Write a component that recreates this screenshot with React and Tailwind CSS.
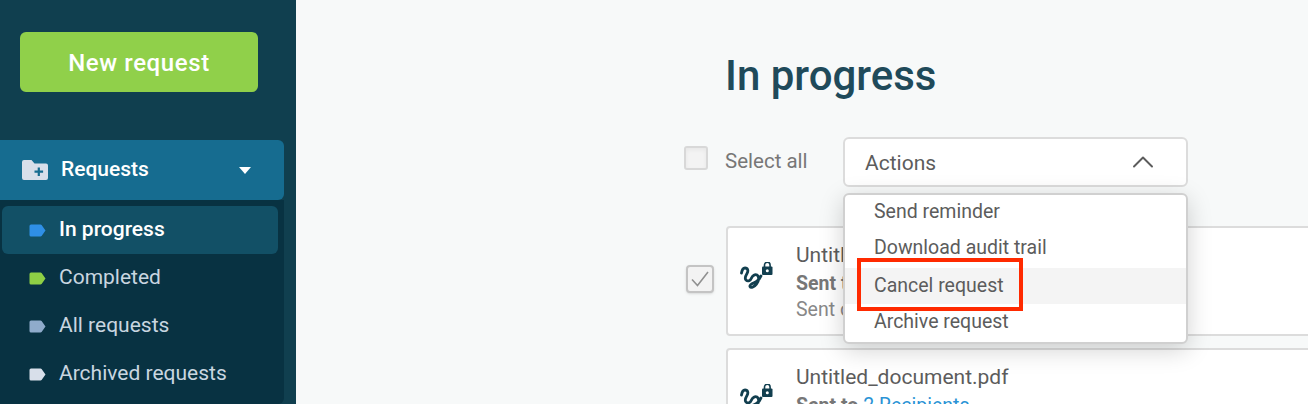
import { ChevronUp } from 'lucide-react';

function Tag({ color }) {
  return (
    <svg width="17" height="13" viewBox="0 0 17 13" className="shrink-0">
      <path d="M2 0.5h9.5a1.5 1.5 0 0 1 1.1.5l3.9 5.5-3.9 5.500a1.500 1.500 0 0 1-1.100.5H2A1.500 1.500 0 0 1 .5 11V2A1.500 1.500 0 0 1 2 .5z" fill={color} />
    </svg>
  );
}

function SignIcon() {
  return (
    <svg width="34" height="28" viewBox="0 0 34 28" className="shrink-0">
      <path d="M1.500 11C2 8 3.500 6 5 6C8 6 8.500 9 7 11.500C5.500 14 4.500 16.500 6 18C8 20 10.500 18.500 11.500 16C12.500 13.500 15 12 17 13C19.500 14.500 19 19 16.500 22C14.500 24.500 11 26.500 10 24.500C9 22 14 21 16.500 19.500C18.500 18.300 20 16.500 21 14"
        fill="none" stroke="#123f4f" strokeWidth="2.800" strokeLinecap="round" strokeLinejoin="round" />
      <path d="M24.500 5V3a2.800 2.800 0 0 1 5.600 0v2" fill="none" stroke="#123f4f" strokeWidth="1.600" />
      <path d="M23 4.500h8.500a1 1 0 0 1 1 1V12a1 1 0 0 1-1 1H23a1 1 0 0 1-1-1V5.500a1 1 0 0 1 1-1z" fill="#123f4f" />
      <circle cx="27.300" cy="8.700" r="1.500" fill="#ffffff" />
    </svg>
  );
}

function DocCard({ recipients }) {
  return (
    <div className="w-[640px] h-[110px] shrink-0 bg-white border-2 border-[#dcdcdc] rounded flex">
      <div className="pl-[12px] pt-[34px] w-[68px]"><SignIcon /></div>
      <div className="pt-[13px] text-[#5c5c5c]">
        <p className="text-[21px] leading-[28px]">Untitled_document.pdf</p>
        <p className="text-[19.500px] leading-[26px] mt-[2px]">
          <span className="font-bold text-[#777]">Sent to </span>
          <span className="text-[#2a93d5]">{recipients}</span>
        </p>
        <p className="text-[19.500px] leading-[26px] text-[#888]">Sent on 12/04/2020</p>
      </div>
    </div>
  );
}

export default function App() {
  const requests = [
    { label: 'In progress', color: '#2f8fe6', active: true },
    { label: 'Completed', color: '#8ecf45' },
    { label: 'All requests', color: '#8fabcb' },
    { label: 'Archived requests', color: '#d8dfea' },
  ];

  return (
    <div className="flex h-[404px] w-[1308px] overflow-hidden bg-[#f7f9f9] font-['Roboto',sans-serif]">
      {/* sidebar */}
      <div className="w-[296px] shrink-0 bg-[#103f4f] flex flex-col">
        <div className="px-5 pt-8">
          <button className="w-[238px] h-[60px] pt-[1px] bg-[#90d04a] rounded-md text-white text-[24px] font-medium tracking-[0.6px]">New request</button>
        </div>
        <div className="w-[284px] h-[60px] mt-12 bg-[#166c90] rounded-r-md flex items-center pl-[22px] pr-[33px] text-white">
          <svg width="26" height="22" viewBox="0 0 26 22" className="shrink-0">
            <path d="M2 1h7.500l3 3.500H24a2 2 0 0 1 2 2V19a2 2 0 0 1-2 2H2a2 2 0 0 1-2-2V3a2 2 0 0 1 2-2z" fill="#d8dfea" />
            <path d="M16.800 8.500v8.500M12.500 12.700h8.600" stroke="#166c90" strokeWidth="2.200" />
          </svg>
          <span className="ml-[13px] text-[21px] font-medium flex-1">Requests</span>
          <span className="w-0 h-0 border-l-[6.500px] border-r-[6.500px] border-t-[7px] border-l-transparent border-r-transparent border-t-white" />
        </div>
        <div className="w-[284px] flex-1 bg-[#083242] rounded-br-md pl-[2px] pr-[6px] pt-[6px]">
          {requests.map((r) => (
            <div key={r.label} className={`h-[48px] flex items-center pl-[27px] gap-[13px] rounded-md text-[21px] ${r.active ? 'bg-[#125066] text-white font-medium' : 'text-[#c9d6e0]'}`}>
              <Tag color={r.color} />
              <span>{r.label}</span>
            </div>
          ))}
        </div>
      </div>

      {/* main */}
      <div className="relative flex-1 pl-[388px] overflow-hidden">
        <h1 className="pl-[41px] pt-[51px] text-[42px] leading-[50px] font-medium text-[#1f4a5a]">In progress</h1>
        <div className="flex items-center mt-[36px] h-[50px]">
          <span className="w-[24px] h-[24px] mb-[8px] bg-[#f3f3f3] border-2 border-[#d8d8d8] rounded-[3px] shrink-0 shadow-inner" />
          <span className="ml-[17px] mb-[2px] w-[118px] text-[20.500px] text-[#777]">Select all</span>
          <div className="w-[345px] h-[50px] bg-white border-2 border-[#dcdcdc] rounded-md flex items-center justify-between pl-[20px] pr-[25px] text-[21px] text-[#5c5c5c]">
            <span className="pt-[3px]">Actions</span>
            <ChevronUp size={36} strokeWidth={1.300} />
          </div>
        </div>
        <div className="flex items-center mt-[39px]">
          <span className="w-[28px] h-[28px] ml-[2px] mr-[12px] mb-[4px] bg-[#f3f3f3] border-2 border-[#c4c4c4] rounded-[4px] shrink-0 flex items-center justify-center shadow-sm">
            <svg width="20" height="18" viewBox="0 0 20 18"><path d="M2 9.500l5.500 6L18 2" fill="none" stroke="#909090" strokeWidth="1.600" /></svg>
          </span>
          <DocCard recipients="1 Recipient" />
        </div>
        <div className="pl-[42px] mt-[12px]">
          <DocCard recipients="2 Recipients" />
        </div>

        {/* open actions menu */}
        <div className="absolute left-[547px] top-[193px] w-[345px] h-[151px] bg-white border-2 border-[#d0d0d0] rounded-md shadow-[0_6px_24px_rgba(0,0,0,0.18)] text-[19.500px] text-[#5c5c5c]">
          <div className="h-[36px] -mt-[1px] flex items-center pl-[29px]">Send reminder</div>
          <div className="h-[36px] flex items-center pl-[29px]">Download audit trail</div>
          <div className="h-[36px] mt-[2px] flex items-center pl-[29px] bg-[#f4f4f4]">Cancel request</div>
          <div className="h-[36px] flex items-center pl-[29px]">Archive request</div>
        </div>
        {/* red highlight box */}
        <div className="absolute left-[561px] top-[258px] w-[166px] h-[53px] border-4 border-[#ff2a00]" />
      </div>
    </div>
  );
}
